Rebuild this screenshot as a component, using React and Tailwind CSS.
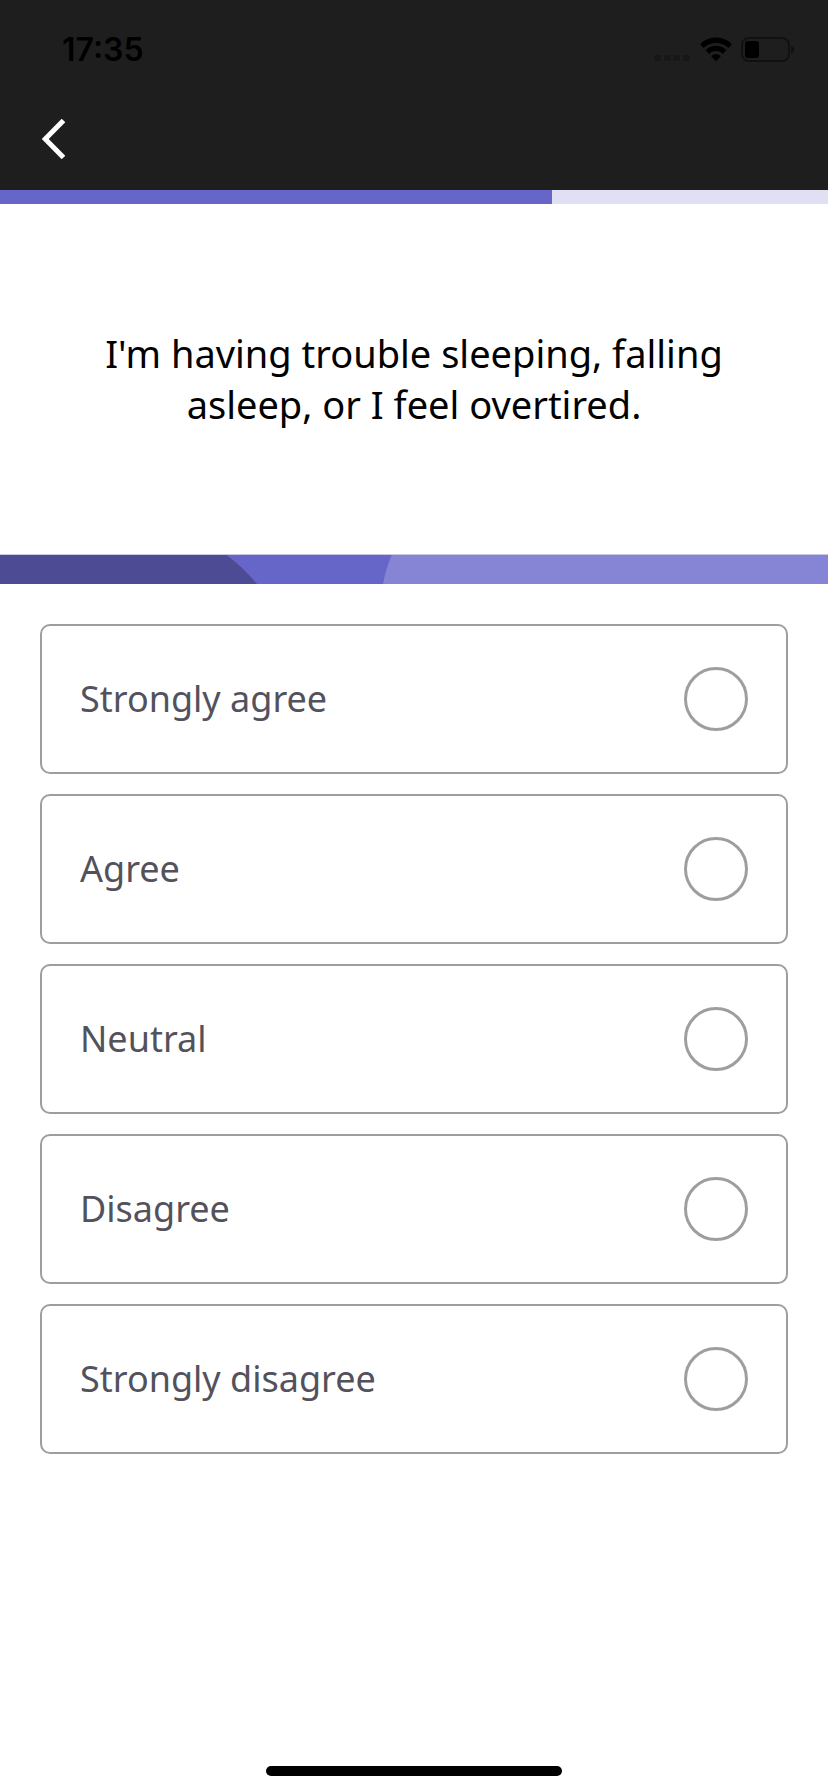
import { useState } from 'react'

const answers = [
  { value: 'strongly-agree', label: 'Strongly agree' },
  { value: 'agree', label: 'Agree' },
  { value: 'neutral', label: 'Neutral' },
  { value: 'disagree', label: 'Disagree' },
  { value: 'strongly-disagree', label: 'Strongly disagree' },
]

const StatusBar = () => (
  <div className="flex items-center justify-between h-[100px] pl-[62px] pr-8">
    <span className="font-['Inter',sans-serif] text-[32px] leading-10 font-semibold text-black">17:35</span>
    <div className="flex items-center gap-2 text-black">
      {/* no signal */}
      <svg className="w-10 h-7" viewBox="0 0 40 28" fill="#171717">
        <rect x="2" y="19" width="7" height="6" rx="2" />
        <rect x="12" y="19" width="7" height="6" rx="2" />
        <rect x="21" y="19" width="7" height="6" rx="2" />
        <rect x="31" y="19" width="7" height="6" rx="2" />
      </svg>
      <svg className="w-8 h-7" viewBox="0 0 32 28" fill="currentColor">
        <path d="M16 1.500C10 1.500 4.500 3.800 0.600 7.700c-.3.300-.3.800 0 1.100l2.500 2.700c.3.300.7.300 1 0C7.400 8.500 11.500 6.900 16 6.900s8.600 1.600 11.900 4.600c.3.300.7.300 1 0l2.500-2.700c.3-.3.300-.8 0-1.100C27.500 3.800 22 1.500 16 1.500z" />
        <path d="M16 9.800c-3.800 0-7.200 1.400-9.800 3.800-.3.300-.3.800 0 1.100l2.600 2.700c.3.300.7.300 1 0 1.700-1.500 3.800-2.300 6.200-2.300s4.500.8 6.200 2.300c.3.300.7.300 1 0l2.600-2.700c.3-.3.300-.8 0-1.100-2.600-2.400-6-3.800-9.800-3.800z" />
        <path d="M16 18.200c-1.700 0-3.200.6-4.400 1.600-.3.300-.3.700 0 1l3.900 4c.3.300.7.300 1 0l3.900-4c.3-.3.300-.7 0-1-1.200-1-2.700-1.600-4.400-1.600z" />
      </svg>
      <svg className="w-14 h-7" viewBox="0 0 56 28">
        <rect x="2" y="2" width="47" height="23" rx="7" fill="none" stroke="#111111" strokeWidth="2" />
        <rect x="5" y="5" width="14" height="17" rx="3" fill="black" />
        <path d="M51 9.500c2 .8 3.200 2.300 3.200 4s-1.200 3.200-3.200 4z" fill="#111111" />
      </svg>
    </div>
  </div>
)

export default function App() {
  const [selected, setSelected] = useState('')
  const progress = (2 / 3) * 100

  return (
    <div className="min-h-screen flex flex-col bg-white font-['Noto_Sans',sans-serif]">
      <header className="bg-[#1e1e1e] h-[190px]">
        <StatusBar />
        <nav className="px-8">
          <button type="button" aria-label="Back" className="w-11 h-[78px] grid place-items-center text-white">
            <svg className="w-6 h-10" viewBox="0 0 24 40" fill="none" stroke="currentColor" strokeWidth="5">
              <path d="M21.500 1.500L3.200 20l18.300 18.500" />
            </svg>
          </button>
        </nav>
      </header>

      <div className="h-[14px] bg-[#e0dff3]">
        <div className="h-full bg-[#6665c8]" style={{ width: `${progress}%` }}></div>
      </div>

      <main className="flex-1 flex flex-col">
        <div className="h-[350px] px-20 grid place-items-center">
          <h1 id="question" className="text-[38px] leading-[51px] text-center text-black">
            I'm having trouble sleeping, falling asleep, or I feel overtired.
          </h1>
        </div>

        <svg className="w-full h-[30px]" viewBox="0 0 828 30" preserveAspectRatio="none">
          <rect width="828" height="30" fill="#6665c8" />
          <path d="M0 0H225Q243 13 257 30H0z" fill="#4c4b94" />
          <path d="M392 0H828V30H383Q386 14 392 0z" fill="#8584d5" />
          <rect width="828" height="1" fill="#c9c8e2" />
        </svg>

        <div role="radiogroup" aria-labelledby="question" className="flex flex-col gap-5 p-10">
          {answers.map((answer) => (
            <label
              key={answer.value}
              className="flex items-center justify-between h-[150px] px-[38px] border-2 border-[#9e9e9e] rounded-[10px] text-4xl text-[#53525c] cursor-pointer"
            >
              {answer.label}
              <input
                type="radio"
                name="answer"
                value={answer.value}
                checked={selected === answer.value}
                onChange={() => setSelected(answer.value)}
                className="appearance-none w-16 h-16 rounded-full border-3 border-[#9e9e9e] checked:border-[#6665c8] checked:bg-[#6665c8]"
              />
            </label>
          ))}
        </div>
      </main>

      <footer className="flex justify-center pb-4">
        <div className="w-[296px] h-[10px] rounded-full bg-black"></div>
      </footer>
    </div>
  )
}
